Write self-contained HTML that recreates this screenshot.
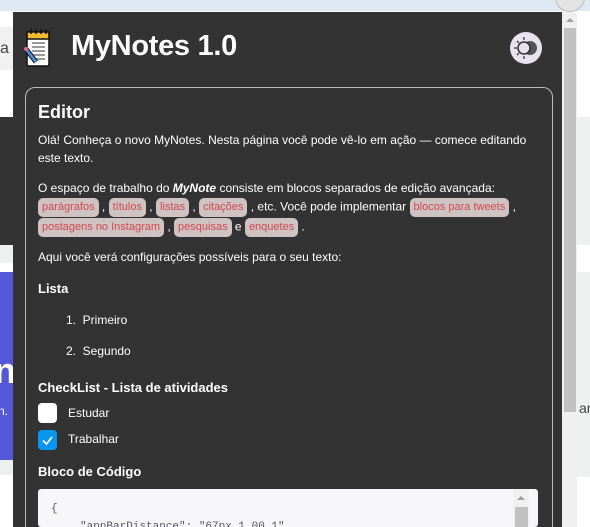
<!DOCTYPE html>
<html style="width:590px;height:527px;overflow:hidden"><head><meta charset="utf-8"><style>
*{margin:0;padding:0;box-sizing:border-box}
body{width:590px;height:527px;overflow:hidden;position:relative;background:#fff;font-family:"Liberation Sans",sans-serif}
.a{position:absolute}
.t{position:absolute;color:#fff;font-size:12px;white-space:nowrap;line-height:16px}
.c{display:inline-block;background:#cfc2c3;color:#d0494f;font-size:11px;padding:3px 4px;border-radius:5px;line-height:13px;vertical-align:middle}
b{font-weight:bold}
</style></head><body>
<div class="a" style="left:0;top:0;width:590px;height:11px;background:#dfe8f5"></div>
<div class="a" style="left:555px;top:-18px;width:30px;height:30px;border-radius:50%;background:#e4e4e4;border:1px solid #bbb"></div>
<div class="a" style="left:0;top:27px;width:13px;height:43px;background:#f1f1f1"></div>
<div class="a" style="left:0;top:40px;font-size:16px;color:#444">a</div>
<div class="a" style="left:0;top:117px;width:13px;height:128px;background:#333"></div>
<div class="a" style="left:0;top:245px;width:13px;height:18px;background:#eef0ef"></div>
<div class="a" style="left:0;top:272px;width:13px;height:188px;background:#5457d8"></div>
<div class="a" style="left:-6px;top:350px;font-size:36px;color:#fff;font-weight:bold">n</div>
<div class="a" style="left:-2px;top:404px;font-size:12px;color:#fff">n.</div>
<div class="a" style="left:0;top:460px;width:13px;height:15px;background:#eef0ef"></div>
<div class="a" style="left:577px;top:117px;width:13px;height:128px;background:#eef1ef"></div>
<div class="a" style="left:577px;top:272px;width:13px;height:205px;background:#eef1ef"></div>
<div class="a" style="left:579px;top:400px;font-size:14px;color:#444">ar</div>
<div class="a" style="left:13px;top:12px;width:549px;height:515px;background:#333;overflow:hidden">
<div class="a" style="left:12px;top:75px;width:528px;height:460px;border:1px solid #bbb;border-radius:10px"></div>
</div>
<div class="a" style="left:562px;top:12px;width:15px;height:515px;background:#f0f0f0"></div>
<div class="a" style="left:566px;top:18px;width:0;height:0;border-left:4px solid transparent;border-right:4px solid transparent;border-bottom:4px solid #a0a0a0"></div>
<div class="a" style="left:564px;top:28px;width:12px;height:384px;background:#c1c1c1"></div>
<svg class="a" style="left:23px;top:28px" width="32" height="42" viewBox="0 0 32 42">
<rect x="4" y="4" width="22" height="34" rx="2" fill="#fff" stroke="#111" stroke-width="1.5"/>
<rect x="4" y="4" width="22" height="7" fill="#f2b931" stroke="#111" stroke-width="1.5"/>
<g stroke="#111" stroke-width="1.5"><line x1="8" y1="1" x2="8" y2="6"/><line x1="13" y1="1" x2="13" y2="6"/><line x1="18" y1="1" x2="18" y2="6"/><line x1="23" y1="1" x2="23" y2="6"/></g>
<g stroke="#777" stroke-width="1.5"><line x1="9" y1="15" x2="22" y2="15"/><line x1="9" y1="19" x2="22" y2="19"/><line x1="9" y1="23" x2="22" y2="23"/><line x1="9" y1="27" x2="22" y2="27"/><line x1="13" y1="31" x2="22" y2="31"/></g>
<line x1="3" y1="21" x2="13" y2="34" stroke="#111" stroke-width="5"/>
<line x1="3" y1="21" x2="13" y2="34" stroke="#4a8ad4" stroke-width="3"/>
<circle cx="3" cy="21" r="2" fill="#e86a8a"/>
</svg>
<div class="a" style="left:71px;top:30px;font-size:29px;color:#fff;font-weight:bold;letter-spacing:-0.3px">MyNotes 1.0</div>
<svg class="a" style="left:510px;top:32px" width="32" height="32" viewBox="0 0 32 32">
<circle cx="16" cy="16" r="16" fill="#e6e3ef"/>
<circle cx="20" cy="16" r="7" fill="#555"/>
<circle cx="14" cy="16" r="6" fill="#e6e3ef" stroke="#333" stroke-width="1.5"/>
<g stroke="#444" stroke-width="1.4"><line x1="14" y1="5" x2="14" y2="8"/><line x1="14" y1="24" x2="14" y2="27"/><line x1="4" y1="16" x2="7" y2="16"/><line x1="7" y1="9" x2="9" y2="11"/><line x1="7" y1="23" x2="9" y2="21"/></g>
</svg>
<div class="t" style="left:38px;top:101px;font-size:18px;font-weight:bold;line-height:22px">Editor</div>
<div class="t" style="left:38px;top:132px">Olá! Conheça o novo MyNotes. Nesta página você pode vê-lo em ação — comece editando</div>
<div class="t" style="left:38px;top:150px">este texto.</div>
<div class="t" style="left:38px;top:180px">O espaço de trabalho do <b><i>MyNote</i></b> consiste em blocos separados de edição avançada:</div>
<div class="t" style="left:38px;top:198px"><span class="c">parágrafos</span> , <span class="c">títulos</span> , <span class="c">listas</span> , <span class="c">citações</span> , etc. Você pode implementar <span class="c">blocos para tweets</span> ,</div>
<div class="t" style="left:38px;top:218px"><span class="c">postagens no Instagram</span> , <span class="c">pesquisas</span> e <span class="c">enquetes</span> .</div>
<div class="t" style="left:38px;top:249px">Aqui você verá configurações possíveis para o seu texto:</div>
<div class="t" style="left:38px;top:281px;font-size:13px;font-weight:bold">Lista</div>
<div class="t" style="left:66px;top:312px">1.&nbsp; Primeiro</div>
<div class="t" style="left:66px;top:343px">2.&nbsp; Segundo</div>
<div class="t" style="left:38px;top:380px;font-size:13px;font-weight:bold">CheckList - Lista de atividades</div>
<div class="a" style="left:38px;top:403px;width:19px;height:20px;background:#fff;border-radius:4px"></div>
<div class="t" style="left:68px;top:405px">Estudar</div>
<div class="a" style="left:38px;top:430px;width:19px;height:20px;background:#0a95f0;border-radius:4px"></div>
<svg class="a" style="left:38px;top:430px" width="19" height="20"><path d="M5 10.5 L8.5 14 L14 7" stroke="#fff" stroke-width="1.6" fill="none"/></svg>
<div class="t" style="left:68px;top:431px">Trabalhar</div>
<div class="t" style="left:38px;top:464px;font-size:13px;font-weight:bold">Bloco de Código</div>
<div class="a" style="left:38px;top:489px;width:500px;height:38px;background:#f7f7f9;border-radius:3px"></div>
<div class="a" style="left:513px;top:489px;width:16px;height:38px;background:#f0f0f0"></div>
<div class="a" style="left:517px;top:496px;width:0;height:0;border-left:4px solid transparent;border-right:4px solid transparent;border-bottom:4px solid #a0a0a0"></div>
<div class="a" style="left:515px;top:507px;width:13px;height:20px;background:#c1c1c1"></div>
<div class="a" style="left:51px;top:503px;font-family:'Liberation Mono',monospace;font-size:11px;color:#556">{</div>
<div class="a" style="left:80px;top:521px;font-family:'Liberation Mono',monospace;font-size:11px;color:#556;white-space:nowrap">"appBarDistance": "67px 1.00 1"</div>
</body></html>
